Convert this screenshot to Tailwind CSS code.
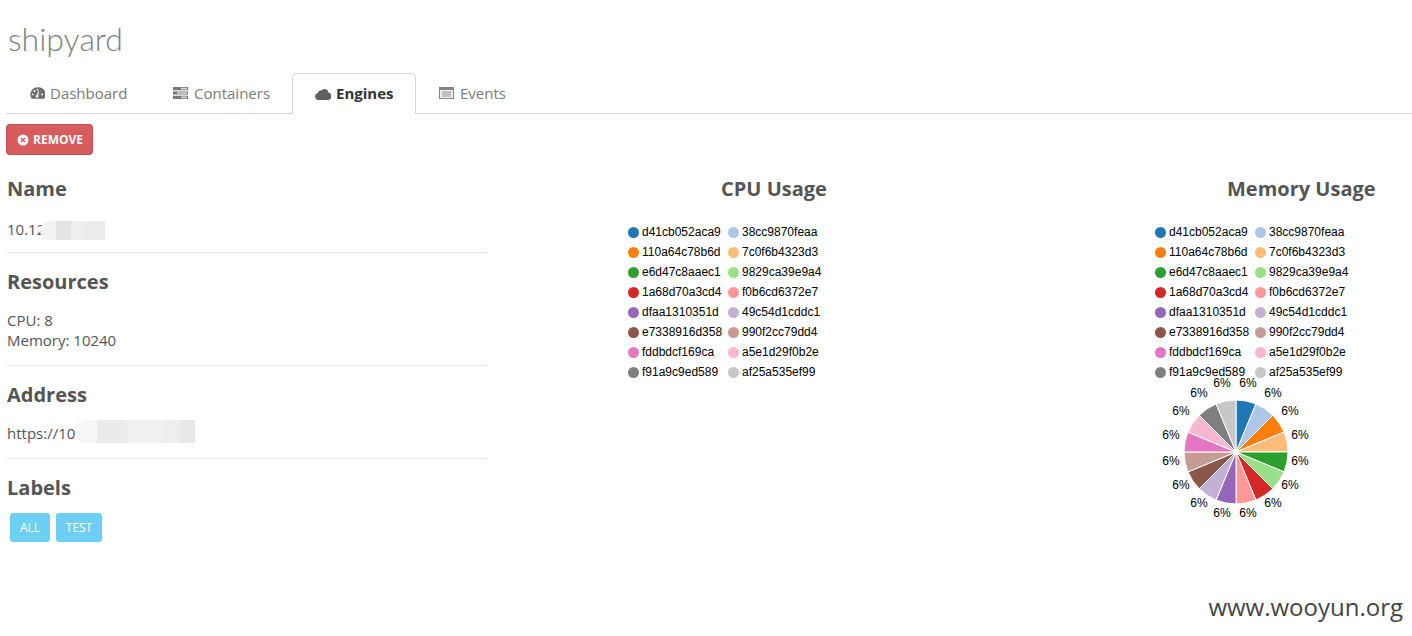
<!DOCTYPE html>
<html lang="en">
<head>
<meta charset="utf-8">
<title>shipyard</title>
<script src="https://cdn.jsdelivr.net/npm/@tailwindcss/browser@4"></script>
</head>
<body class="relative h-[636px] overflow-hidden bg-white font-['Open_Sans',sans-serif] text-[15px] text-[#555]">

<!-- header -->
<div class="h-[73px] pl-[8px] pt-[15px]">
  <h1 class="font-['Lato',sans-serif] text-[32px] leading-[48px] font-light text-[#808080]">shipyard</h1>
</div>

<!-- tabs -->
<nav class="ml-[6px] flex h-[41px] border-b border-[#d4d4d5]">
  <a class="flex w-[144px] items-center pl-[24px] text-[#7b7b7b]">
    <svg class="mr-[5px] h-[14px] w-[15px]" viewBox="0 0 16 14" fill="#6e6e6e"><path d="M8 1a7.6 7.6 0 0 0-6.6 11.4l.5.6h13.200l.5-.6A7.600 7.600 0 0 0 8 1zM3 9.500a1 1 0 1 1 0-2 1 1 0 0 1 0 2zm1.700-3.600a1 1 0 1 1 0-2 1 1 0 0 1 0 2zM8 4.500a1 1 0 1 1 0-2 1 1 0 0 1 0 2zm1 6.500a1.500 1.500 0 1 1-1.800-1.900L8.700 5h.9l-.7 4.400c.1.400.1 1.100.1 1.600zm4-1.500a1 1 0 1 1 0-2 1 1 0 0 1 0 2z"/></svg>
    Dashboard
  </a>
  <a class="flex w-[142px] items-center pl-[23px] text-[#7b7b7b]">
    <svg class="mr-[6px] h-[12px] w-[15px]" viewBox="0 0 15 12" fill="#777"><path d="M0 0h15v3.200H0zM0 4.400h15v3.200H0zM0 8.800h15V12H0z"/><path fill="#d8d8d8" d="M8 .8h6v1.600H8zM4 5.200h10v1.600H4zM8 9.600h6v1.600H8z"/></svg>
    Containers
  </a>
  <a class="relative z-10 -mb-px flex h-[41px] w-[124px] items-center rounded-t-[5px] border border-b-0 border-[#d4d4d5] bg-white pb-px pl-[22px] font-bold text-[#333]">
    <svg class="mr-[5px] h-[12px] w-[16px]" viewBox="0 0 16 12" fill="#5f5f5f"><path d="M3.600 12A3.500 3.500 0 0 1 2.800 5.100 3.400 3.400 0 0 1 6.600 2.400 4 4 0 0 1 13.600 4.700 3.700 3.700 0 0 1 12.600 12z"/></svg>
    Engines
  </a>
  <a class="flex items-center pl-[23px] text-[#7b7b7b]">
    <svg class="mr-[6px] h-[12px] w-[15px]" viewBox="0 0 15 12"><path fill="#858585" d="M0 0h15v12H0z"/><path fill="#eeeeee" d="M1 3h13v8H1z"/><path fill="#8f8f8f" d="M3 4.500h9v1H3zM3 6.500h9v1H3zM3 8.500h9v1H3z"/></svg>
    Events
  </a>
</nav>

<div class="pl-[6px] pt-[10px]">
  <button class="flex h-[31px] w-[87px] items-center justify-center rounded-[4px] border border-black/10 bg-[#d75c5c] pl-[1px] text-[12px] font-bold text-white">
    <svg class="mr-[4px] h-[12px] w-[12px]" viewBox="0 0 12 12"><circle cx="6" cy="6" r="5.500" fill="#fff"/><path d="M4 4l4 4M8 4l-4 4" stroke="#d95c5c" stroke-width="1.600"/></svg>
    REMOVE
  </button>
</div>

<main class="flex gap-[47px] pl-[7px]">

  <!-- details -->
  <section class="w-[480px] shrink-0 pt-[20px]">
    <div class="border-b border-[#e5e5e5] pb-[13px]">
      <h2 class="mb-[16px] text-[20px] leading-[28px] font-bold">Name</h2>
      <div class="relative h-[20px] leading-[20px]">10.12
        <div class="absolute top-[2px] left-[33px] flex h-[19px]">
          <i class="w-[16px] rounded-l-full bg-[#f2f2f2]"></i><i class="w-[15px] bg-[#e3e3e3]"></i><i class="w-[15px] bg-[#eeeeee]"></i><i class="w-[19px] bg-[#ececec]"></i>
        </div>
      </div>
    </div>
    <div class="border-b border-[#e5e5e5] pt-[15px] pb-[15px]">
      <h2 class="mb-[14px] text-[20px] leading-[28px] font-bold">Resources</h2>
      <div class="leading-[20px]">CPU: 8</div>
      <div class="leading-[20px]">Memory: 10240</div>
    </div>
    <div class="border-b border-[#e5e5e5] pt-[15px] pb-[15px]">
      <h2 class="mb-[14px] text-[20px] leading-[28px] font-bold">Address</h2>
      <div class="relative h-[20px] leading-[20px]">https://10
        <div class="absolute top-[-3px] left-[68px] flex h-[23px]">
          <i class="w-[22px] rounded-l-full bg-[#f6f6f6]"></i><i class="w-[30px] bg-[#ebebeb]"></i><i class="w-[38px] bg-[#f0f0f0]"></i><i class="w-[15px] bg-[#eeeeee]"></i><i class="w-[15px] bg-[#e8e8e8]"></i>
        </div>
      </div>
    </div>
    <div class="pt-[15px]">
      <h2 class="mb-[11px] text-[20px] leading-[28px] font-bold">Labels</h2>
      <div class="flex gap-[6px] pl-[3px]">
        <span class="flex h-[29px] w-[40px] items-center justify-center rounded-[3px] bg-[#6ecff5] text-[12px] text-white">ALL</span>
        <span class="flex h-[29px] w-[46px] items-center justify-center rounded-[3px] bg-[#6ecff5] text-[12px] text-white">TEST</span>
      </div>
    </div>
  </section>

  <!-- cpu usage -->
  <section class="w-[480px] shrink-0 pt-[20px]">
    <h2 class="mb-[19px] text-center text-[20px] leading-[28px] font-bold">CPU Usage</h2>
    <div class="ml-[94px] grid w-[200px] grid-cols-[100px_100px] font-['Liberation_Sans',sans-serif] text-[12px] leading-[20px] text-black">
      <div class="flex items-center"><i class="mr-[3px] h-[11px] w-[11px] rounded-full bg-[#1f77b4]"></i>d41cb052aca9</div>
      <div class="flex items-center"><i class="mr-[3px] h-[11px] w-[11px] rounded-full bg-[#aec7e8]"></i>38cc9870feaa</div>
      <div class="flex items-center"><i class="mr-[3px] h-[11px] w-[11px] rounded-full bg-[#ff7f0e]"></i>110a64c78b6d</div>
      <div class="flex items-center"><i class="mr-[3px] h-[11px] w-[11px] rounded-full bg-[#ffbb78]"></i>7c0f6b4323d3</div>
      <div class="flex items-center"><i class="mr-[3px] h-[11px] w-[11px] rounded-full bg-[#2ca02c]"></i>e6d47c8aaec1</div>
      <div class="flex items-center"><i class="mr-[3px] h-[11px] w-[11px] rounded-full bg-[#98df8a]"></i>9829ca39e9a4</div>
      <div class="flex items-center"><i class="mr-[3px] h-[11px] w-[11px] rounded-full bg-[#d62728]"></i>1a68d70a3cd4</div>
      <div class="flex items-center"><i class="mr-[3px] h-[11px] w-[11px] rounded-full bg-[#ff9896]"></i>f0b6cd6372e7</div>
      <div class="flex items-center"><i class="mr-[3px] h-[11px] w-[11px] rounded-full bg-[#9467bd]"></i>dfaa1310351d</div>
      <div class="flex items-center"><i class="mr-[3px] h-[11px] w-[11px] rounded-full bg-[#c5b0d5]"></i>49c54d1cddc1</div>
      <div class="flex items-center"><i class="mr-[3px] h-[11px] w-[11px] rounded-full bg-[#8c564b]"></i>e7338916d358</div>
      <div class="flex items-center"><i class="mr-[3px] h-[11px] w-[11px] rounded-full bg-[#c49c94]"></i>990f2cc79dd4</div>
      <div class="flex items-center"><i class="mr-[3px] h-[11px] w-[11px] rounded-full bg-[#e377c2]"></i>fddbdcf169ca</div>
      <div class="flex items-center"><i class="mr-[3px] h-[11px] w-[11px] rounded-full bg-[#f7b6d2]"></i>a5e1d29f0b2e</div>
      <div class="flex items-center"><i class="mr-[3px] h-[11px] w-[11px] rounded-full bg-[#7f7f7f]"></i>f91a9c9ed589</div>
      <div class="flex items-center"><i class="mr-[3px] h-[11px] w-[11px] rounded-full bg-[#c7c7c7]"></i>af25a535ef99</div>
    </div>
  </section>

  <!-- memory usage -->
  <section class="min-w-0 flex-1 pt-[20px]">
    <h2 class="mb-[19px] pl-[166px] text-[20px] leading-[28px] font-bold whitespace-nowrap">Memory Usage</h2>
    <div class="ml-[94px] grid w-[200px] grid-cols-[100px_100px] font-['Liberation_Sans',sans-serif] text-[12px] leading-[20px] text-black">
      <div class="flex items-center"><i class="mr-[3px] h-[11px] w-[11px] rounded-full bg-[#1f77b4]"></i>d41cb052aca9</div>
      <div class="flex items-center"><i class="mr-[3px] h-[11px] w-[11px] rounded-full bg-[#aec7e8]"></i>38cc9870feaa</div>
      <div class="flex items-center"><i class="mr-[3px] h-[11px] w-[11px] rounded-full bg-[#ff7f0e]"></i>110a64c78b6d</div>
      <div class="flex items-center"><i class="mr-[3px] h-[11px] w-[11px] rounded-full bg-[#ffbb78]"></i>7c0f6b4323d3</div>
      <div class="flex items-center"><i class="mr-[3px] h-[11px] w-[11px] rounded-full bg-[#2ca02c]"></i>e6d47c8aaec1</div>
      <div class="flex items-center"><i class="mr-[3px] h-[11px] w-[11px] rounded-full bg-[#98df8a]"></i>9829ca39e9a4</div>
      <div class="flex items-center"><i class="mr-[3px] h-[11px] w-[11px] rounded-full bg-[#d62728]"></i>1a68d70a3cd4</div>
      <div class="flex items-center"><i class="mr-[3px] h-[11px] w-[11px] rounded-full bg-[#ff9896]"></i>f0b6cd6372e7</div>
      <div class="flex items-center"><i class="mr-[3px] h-[11px] w-[11px] rounded-full bg-[#9467bd]"></i>dfaa1310351d</div>
      <div class="flex items-center"><i class="mr-[3px] h-[11px] w-[11px] rounded-full bg-[#c5b0d5]"></i>49c54d1cddc1</div>
      <div class="flex items-center"><i class="mr-[3px] h-[11px] w-[11px] rounded-full bg-[#8c564b]"></i>e7338916d358</div>
      <div class="flex items-center"><i class="mr-[3px] h-[11px] w-[11px] rounded-full bg-[#c49c94]"></i>990f2cc79dd4</div>
      <div class="flex items-center"><i class="mr-[3px] h-[11px] w-[11px] rounded-full bg-[#e377c2]"></i>fddbdcf169ca</div>
      <div class="flex items-center"><i class="mr-[3px] h-[11px] w-[11px] rounded-full bg-[#f7b6d2]"></i>a5e1d29f0b2e</div>
      <div class="flex items-center"><i class="mr-[3px] h-[11px] w-[11px] rounded-full bg-[#7f7f7f]"></i>f91a9c9ed589</div>
      <div class="flex items-center"><i class="mr-[3px] h-[11px] w-[11px] rounded-full bg-[#c7c7c7]"></i>af25a535ef99</div>
    </div>
    <!-- viewBox origin is the centre of the pie; the top labels sit up against the legend -->
    <svg class="-mt-[10px] ml-[80px] block h-[150px] w-[190px]" viewBox="-95 -80 190 150">
      <g stroke="#fff" stroke-width="1">
        <path fill="#1f77b4" d="M0 0L0-52A52 52 0 0 1 19.900-48.040Z"/>
        <path fill="#aec7e8" d="M0 0L19.900-48.040A52 52 0 0 1 36.770-36.770Z"/>
        <path fill="#ff7f0e" d="M0 0L36.770-36.770A52 52 0 0 1 48.040-19.900Z"/>
        <path fill="#ffbb78" d="M0 0L48.040-19.900A52 52 0 0 1 52 0Z"/>
        <path fill="#2ca02c" d="M0 0L52 0A52 52 0 0 1 48.040 19.900Z"/>
        <path fill="#98df8a" d="M0 0L48.040 19.900A52 52 0 0 1 36.770 36.770Z"/>
        <path fill="#d62728" d="M0 0L36.770 36.770A52 52 0 0 1 19.900 48.040Z"/>
        <path fill="#ff9896" d="M0 0L19.900 48.040A52 52 0 0 1 0 52Z"/>
        <path fill="#9467bd" d="M0 0L0 52A52 52 0 0 1-19.900 48.040Z"/>
        <path fill="#c5b0d5" d="M0 0L-19.900 48.040A52 52 0 0 1-36.770 36.770Z"/>
        <path fill="#8c564b" d="M0 0L-36.770 36.770A52 52 0 0 1-48.040 19.900Z"/>
        <path fill="#c49c94" d="M0 0L-48.040 19.900A52 52 0 0 1-52 0Z"/>
        <path fill="#e377c2" d="M0 0L-52 0A52 52 0 0 1-48.040-19.900Z"/>
        <path fill="#f7b6d2" d="M0 0L-48.040-19.900A52 52 0 0 1-36.770-36.770Z"/>
        <path fill="#7f7f7f" d="M0 0L-36.770-36.770A52 52 0 0 1-19.900-48.040Z"/>
        <path fill="#c7c7c7" d="M0 0L-19.900-48.040A52 52 0 0 1 0-52Z"/>
      </g>
      <circle r="3" fill="#fff"/>
      <g class="font-['Liberation_Sans',sans-serif] text-[12px]" fill="#000" text-anchor="middle" dominant-baseline="central">
        <text x="12" y="-69">6%</text><text x="37" y="-59">6%</text><text x="54" y="-41">6%</text><text x="64" y="-17">6%</text>
        <text x="64" y="9">6%</text><text x="54" y="33">6%</text><text x="37" y="51">6%</text><text x="12" y="61">6%</text>
        <text x="-14" y="61">6%</text><text x="-37" y="51">6%</text><text x="-55" y="33">6%</text><text x="-65" y="9">6%</text>
        <text x="-65" y="-17">6%</text><text x="-55" y="-41">6%</text><text x="-37" y="-59">6%</text><text x="-14" y="-69">6%</text>
      </g>
    </svg>
  </section>
</main>

<!-- watermark -->
<div class="absolute top-[590px] right-[9px] font-['Open_Sans',sans-serif] text-[24px] leading-[34px] text-[#444]">www.wooyun.org</div>

</body>
</html>
